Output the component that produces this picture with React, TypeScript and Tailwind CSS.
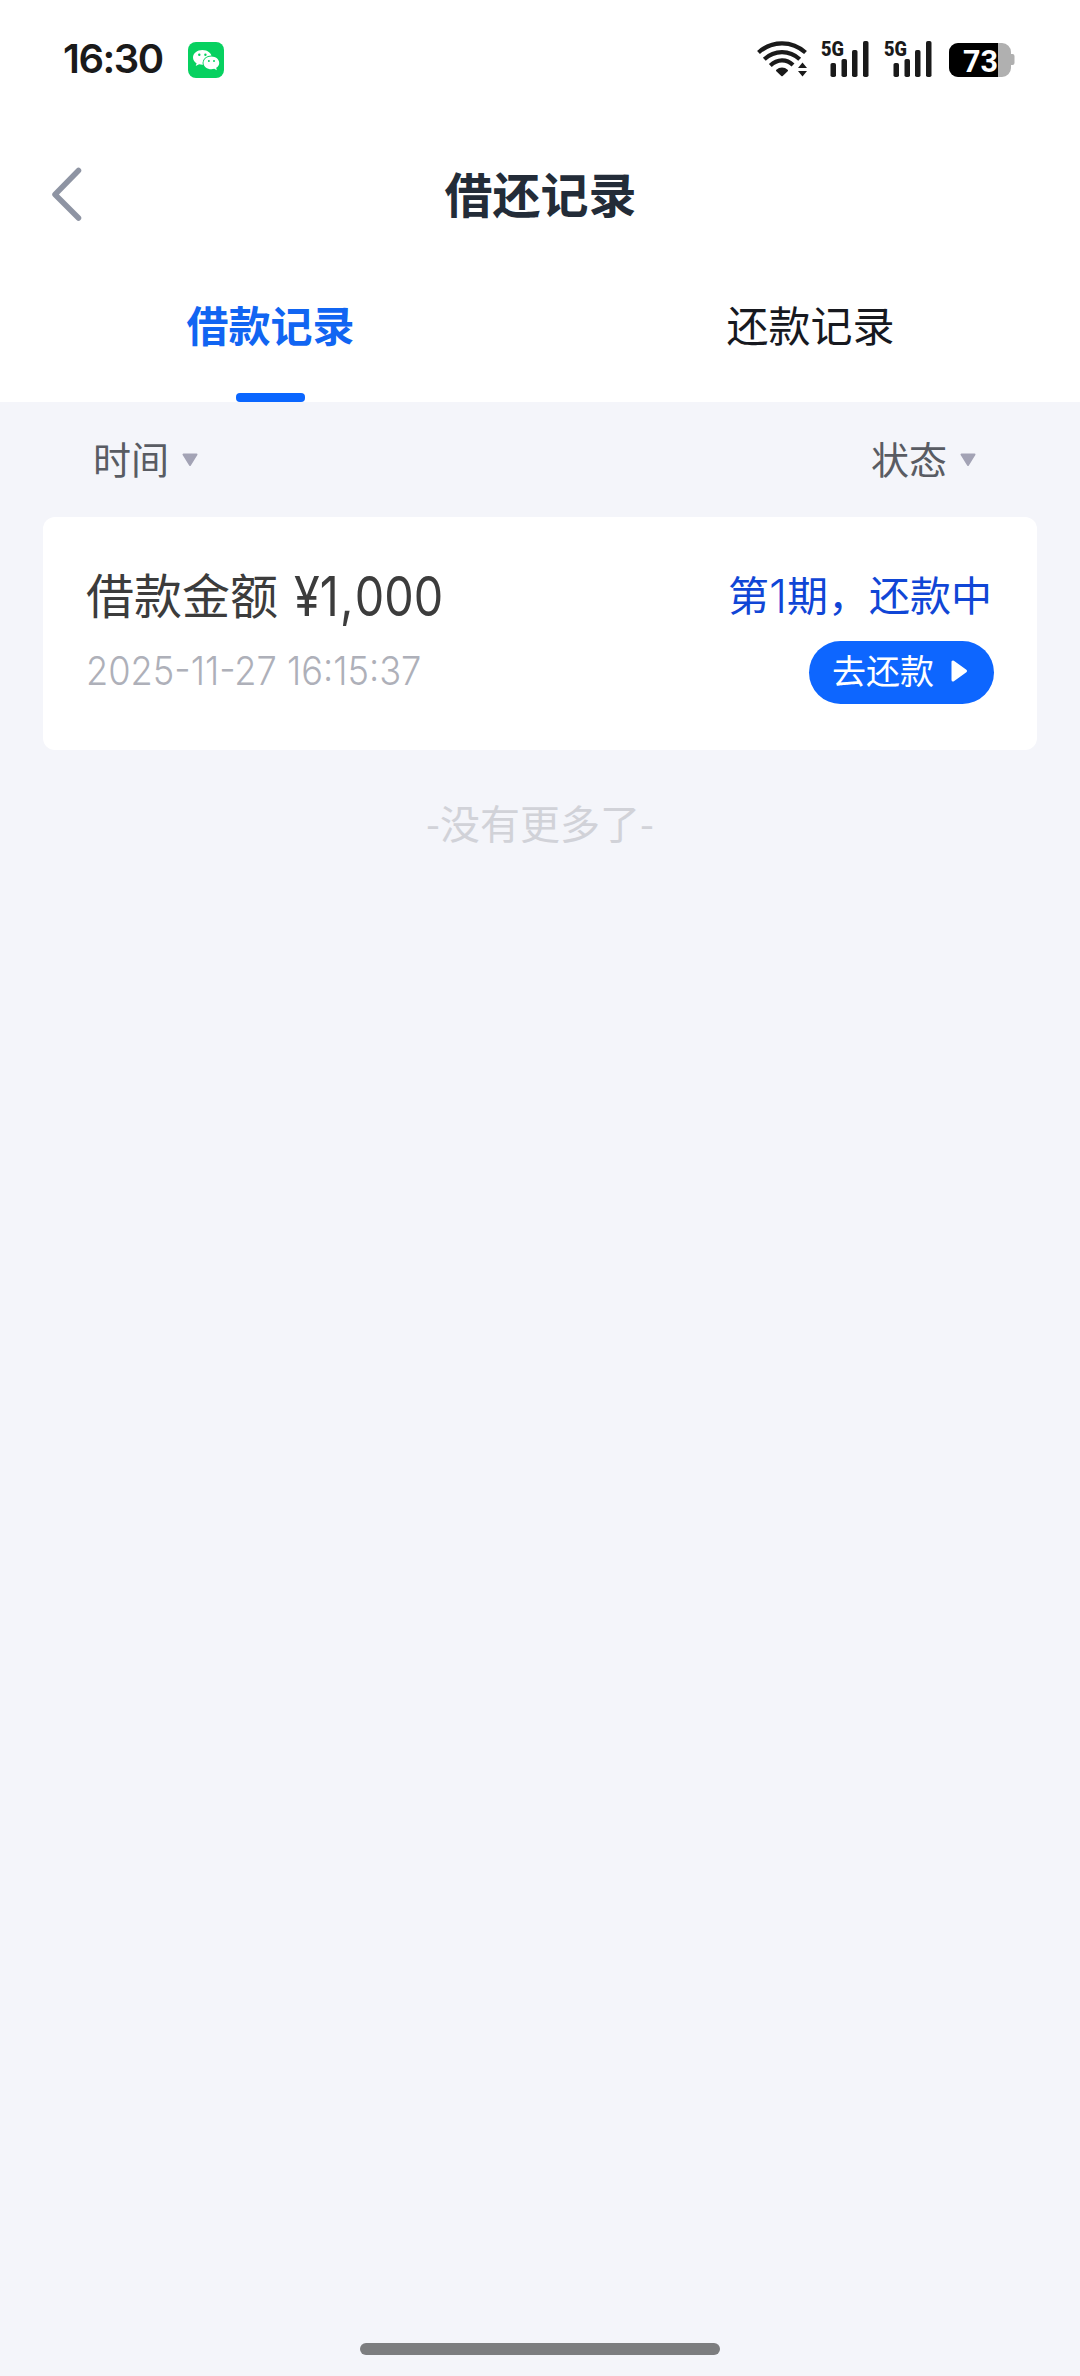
import React from 'react';

interface SignalProps {
  className: string;
}

const WechatBadge: React.FC = () => (
  <svg width="36" height="36" viewBox="0 0 36 36" className="ml-[26px]">
    <rect width="36" height="36" rx="8" fill="#07d160" />
    <path
      d="M14.4 8C9.2 8 5 11.3 5 15.4c0 2.4 1.4 4.5 3.6 5.8l-.9 2.9 3.4-1.8c1 .3 2.1.5 3.3.5 5.2 0 9.4-3.3 9.4-7.4S19.6 8 14.4 8z"
      fill="#fff"
    />
    <ellipse cx="23.4" cy="20.9" rx="8.9" ry="7.3" fill="#07d160" />
    <path
      d="M23.4 14.5c-4.4 0-7.9 2.8-7.9 6.4 0 3.5 3.5 6.3 7.9 6.3 1 0 2-.1 2.9-.4l2.5 1.4-.6-2.4c1.9-1.2 3-2.9 3-4.9 0-3.6-3.4-6.4-7.8-6.4z"
      fill="#fff"
    />
    <circle cx="11.3" cy="12.7" r="1.2" fill="#07d160" />
    <circle cx="17.4" cy="12.7" r="1.2" fill="#07d160" />
    <circle cx="20.9" cy="18.9" r="1" fill="#07d160" />
    <circle cx="26" cy="18.9" r="1" fill="#07d160" />
  </svg>
);

const Wifi: React.FC = () => (
  <svg width="50" height="38" viewBox="0 0 50 38" fill="none" stroke="#1a1a1a">
    <path d="M1.5 12.5C15 .2 35 .2 48.5 12.5" strokeWidth="4.2" />
    <path d="M7.3 19.3C17.5 9.8 32.5 9.8 42.7 19.3" strokeWidth="4.2" />
    <path d="M13.3 25.5C20.5 18.8 29.500 18.8 36 25" strokeWidth="4.2" />
    <path
      d="M20 30.500c2.900-2.600 7.100-2.600 10 0l-5 4.800z"
      fill="#1a1a1a"
      strokeWidth="2"
      strokeLinejoin="round"
    />
    <path d="M45.500 22.500l4.500 5.500h-9zM45.500 36.500l4.500-5.500h-9z" fill="#1a1a1a" stroke="none" />
  </svg>
);

const Signal: React.FC<SignalProps> = ({ className }) => (
  <svg width="48" height="38" viewBox="0 0 48 38" className={`overflow-visible ${className}`} fill="#1a1a1a">
    <text
      x="0"
      y="15.500"
      textLength="23"
      lengthAdjust="spacingAndGlyphs"
      className="font-['Roboto',sans-serif] text-[21px] font-black"
    >
      5G
    </text>
    <rect x="9.500" y="23" width="5.500" height="14" rx="1.800" />
    <rect x="20.500" y="19" width="5.500" height="18" rx="1.800" />
    <rect x="31" y="10" width="5.500" height="27" rx="1.800" />
    <rect x="42" y="1" width="5.500" height="36" rx="1.800" />
  </svg>
);

const Battery: React.FC = () => (
  <svg width="66" height="34" viewBox="0 0 66 34" className="overflow-visible">
    <path
      d="M9 0h44a9 9 0 0 1 9 9v2h1.500a2 2 0 0 1 2 2v7a2 2 0 0 1-2 2H62v3a9 9 0 0 1-9 9H9a9 9 0 0 1-9-9V9a9 9 0 0 1 9-9z"
      fill="#b0b0b0"
    />
    <path d="M9 0h40v34H9a9 9 0 0 1-9-9V9a9 9 0 0 1 9-9z" fill="#000" />
    <text
      x="14"
      y="28.500"
      textLength="35"
      lengthAdjust="spacingAndGlyphs"
      fill="#fff"
      className="font-['Roboto',sans-serif] text-[31px] font-bold"
    >
      73
    </text>
  </svg>
);

const StatusBar: React.FC = () => (
  <div className="flex h-[120px] items-start justify-between pr-[65px] pl-[63px]">
    <div className="flex items-start pt-[42px]">
      <span className="-mt-px w-[99px] font-['Inter',sans-serif] text-[40px] leading-9 font-semibold tracking-[-1.5px] text-[#1a1a1a]">
        16:30
      </span>
      <WechatBadge />
    </div>
    <div className="flex items-start pt-10">
      <Wifi />
      <Signal className="ml-[14px]" />
      <Signal className="ml-[15px]" />
      <div className="ml-[17px] pt-[3px]">
        <Battery />
      </div>
    </div>
  </div>
);

const Caret: React.FC = () => (
  <svg width="18" height="14" viewBox="0 0 18 14" className="mt-[5px]">
    <path d="M2.500 1.500h13L9 12z" fill="#a3a3b5" stroke="#a3a3b5" strokeWidth="2" strokeLinejoin="round" />
  </svg>
);

export default function App() {
  return (
    <div className="flex h-[2376px] w-[1080px] flex-col bg-[#f4f5fa] font-['Noto_Sans_CJK_SC',sans-serif]">
      <header className="h-[402px] bg-white">
        <StatusBar />
        <div className="grid h-[150px] grid-cols-[1fr_auto_1fr] items-center px-[51px]">
          <svg width="32" height="56" viewBox="0 0 32 56" fill="none">
            <path
              d="M27.500 3.500L4 27.500l23.500 23.500"
              stroke="#8e94a3"
              strokeWidth="5.500"
              strokeLinecap="round"
              strokeLinejoin="round"
            />
          </svg>
          <h1 className="pb-[6px] pl-px text-[48px] leading-[60px] font-bold text-[#232c38]">借还记录</h1>
        </div>
        <nav className="grid h-[132px] grid-cols-2 text-[42px] leading-[60px]">
          <div className="flex flex-col items-center justify-between pt-[24px]">
            <span className="pl-px font-bold text-[#1165f2]">借款记录</span>
            <span className="h-[9px] w-[69px] rounded-[4px] bg-[#0a66ff]" />
          </div>
          <div className="flex flex-col items-center pt-[24px]">
            <span className="pl-px text-[#17191f]">还款记录</span>
          </div>
        </nav>
      </header>

      <main className="flex-1 px-[43px]">
        <div className="flex h-[115px] items-center justify-between pr-[60px] pb-[4px] pl-[50px] text-[38px] text-[#595c63]">
          <button className="flex items-center gap-3">
            时间
            <Caret />
          </button>
          <button className="flex items-center gap-3">
            状态
            <Caret />
          </button>
        </div>

        <section className="flex h-[233px] justify-between rounded-xl bg-white pr-[43px] pl-[43px]">
          <div className="flex flex-col pt-[44px]">
            <div className="flex h-[64px] items-center text-[48px] leading-[64px] text-[#3c3c3c]">
              借款金额
              <span className="ml-[16px] w-[170px] origin-left scale-x-[.85] pt-[6px] font-['Inter',sans-serif] text-[55px]">
                ¥<span className="tracking-[1.5px]">1,</span>000
              </span>
            </div>
            <span className="mt-[15px] w-[370px] origin-left scale-x-[.905] font-['Inter',sans-serif] text-[40px] leading-[62px] font-light whitespace-nowrap text-[#aeb0b9]">
              2025-11-27 16:15:37
            </span>
          </div>
          <div className="flex flex-col items-end pt-[44px]">
            <span className="flex h-[64px] items-center pr-[2px] text-[41px] leading-[64px] whitespace-nowrap text-[#1046d6]">
              第
              <span className="w-[18px] pt-[5px] font-['Inter',sans-serif] text-[46px] font-light">1</span>
              期，还款中
            </span>
            <button className="mt-[16px] flex h-[63px] w-[185px] items-center rounded-full bg-[#0d66ff] pb-[3px] pl-[23px] text-[34px] text-white">
              <span className="pb-1">去还款</span>
              <svg width="18" height="24" viewBox="0 0 18 24" className="ml-[16px]">
                <path d="M3 3v18l12.500-9z" fill="#fff" stroke="#fff" strokeWidth="3" strokeLinejoin="round" />
              </svg>
            </button>
          </div>
        </section>

        <p className="pt-[42px] text-center text-[40px] leading-[60px] text-[#d1d2d8]">-没有更多了-</p>
      </main>

      <div className="mb-[21px] h-3 w-[360px] self-center rounded-full bg-[#7c7d7f]" />
    </div>
  );
}
